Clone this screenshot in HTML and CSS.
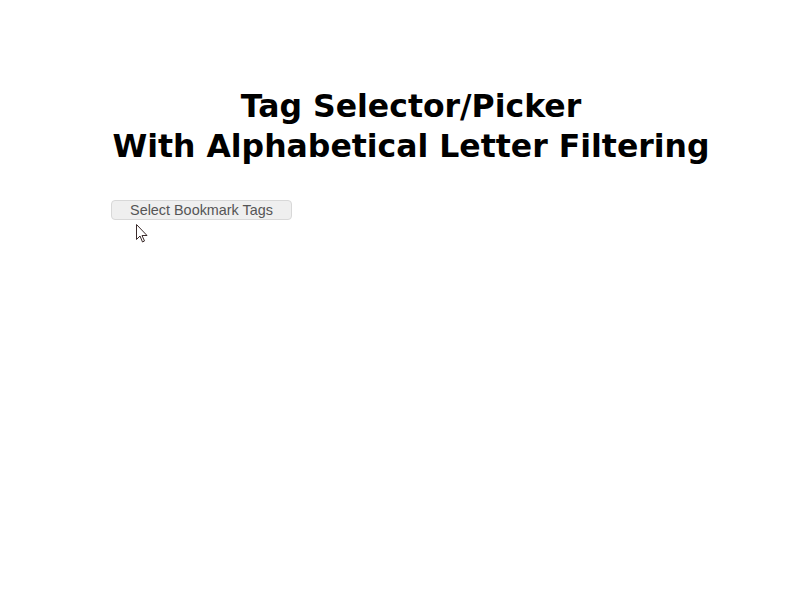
FILE: index.html
```html
<!DOCTYPE html>
<html lang="en">
<head>
    <meta charset="UTF-8">
    <title>Tag Selector/Picker</title>
    <link rel="stylesheet" href="styles.css">
</head>
<body>

    <div class="container">
        <h1>Tag Selector/Picker<br>With Alphabetical Letter Filtering</h1>

        <div class="picker">
            <button id="select-tags" class="select-btn">Select Bookmark Tags</button>

            <!-- mouse pointer hovering the button -->
            <svg class="pointer" width="13" height="20" viewBox="0 0 13 20">
                <path d="M0.5 0.5 L0.5 15.5 L4 12 L6.5 18 L8.5 17 L6 11.5 L11 11.5 Z" fill="#fff" stroke="#3a2a2a" stroke-width="1"/>
            </svg>
        </div>
    </div>

</body>
</html>
```

FILE: styles.css
```css
body {
    margin: 0;
    background-color: #fff;
    font-family: "Liberation Sans", Arial, sans-serif;
}

.container {
    width: 600px;
    margin-left: 111px;
    padding-top: 86px;
}

h1 {
    margin: 0;
    text-align: center;
    font-family: "DejaVu Sans", Verdana, sans-serif;
    font-size: 31.5px;
    line-height: 40px;
    font-weight: bold;
    color: #000;
}

.picker {
    position: relative;
    margin-top: 34px;
    height: 50px;
}

.select-btn {
    display: block;
    width: 181px;
    height: 20px;
    padding: 0;
    font-family: "Liberation Sans", Arial, sans-serif;
    font-size: 14.4px;
    color: #555;
    background-color: #efefef;
    border: 1px solid #d8d8d8;
    border-radius: 4px;
}

.pointer {
    display: block;
    position: absolute;
    left: 25px;
    top: 24px;
}
```
